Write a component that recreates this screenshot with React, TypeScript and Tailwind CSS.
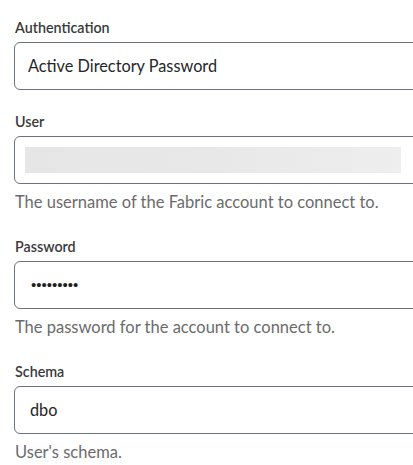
import React from "react";

const font = { fontFamily: "Lato, 'Open Sans', sans-serif" };

function Label({ children }: { children: React.ReactNode }) {
  return (
    <div className="text-[14.3px] leading-[20px] font-semibold text-[#3a3a3a] mb-[4px] pl-[1px]">
      {children}
    </div>
  );
}

function Box({ children }: { children?: React.ReactNode }) {
  return (
    <div className="w-[430px] h-[48px] rounded-[6px] border border-[#6b727c] bg-white flex items-center">
      {children}
    </div>
  );
}

function Help({ children }: { children: React.ReactNode }) {
  return (
    <div className="mt-[6px] text-[16.5px] leading-[25px] text-[#6b6b6b] pl-[1px]">
      {children}
    </div>
  );
}

export default function App() {
  return (
    <div
      className="w-[413px] h-[465px] overflow-hidden bg-white pl-[14px] pt-[18px]"
      style={font}
    >
      <div className="flex flex-col">
        <Label>Authentication</Label>
        <Box>
          <span className="pl-[13px] text-[16.3px] text-[#262626]">Active Directory Password</span>
        </Box>

        <div className="mt-[22px]">
          <Label>User</Label>
          <Box>
            <div className="ml-[10px] w-[376px] h-[26px] bg-gradient-to-r from-[#e6e6e6] via-[#e8e8e8] to-[#eeeeee]" />
          </Box>
          <Help>The username of the Fabric account to connect to.</Help>
        </div>

        <div className="mt-[22px]">
          <Label>Password</Label>
          <Box>
            <span
              className="pl-[16px] text-[15px] text-[#1f1f1f]"
              style={{ fontFamily: "'Liberation Sans', Arial, sans-serif" }}
            >
              •••••••••
            </span>
          </Box>
          <Help>The password for the account to connect to.</Help>
        </div>

        <div className="mt-[22px]">
          <Label>Schema</Label>
          <Box>
            <span className="pl-[15px] text-[16.3px] text-[#262626]">dbo</span>
          </Box>
          <Help>User's schema.</Help>
        </div>
      </div>
    </div>
  );
}
